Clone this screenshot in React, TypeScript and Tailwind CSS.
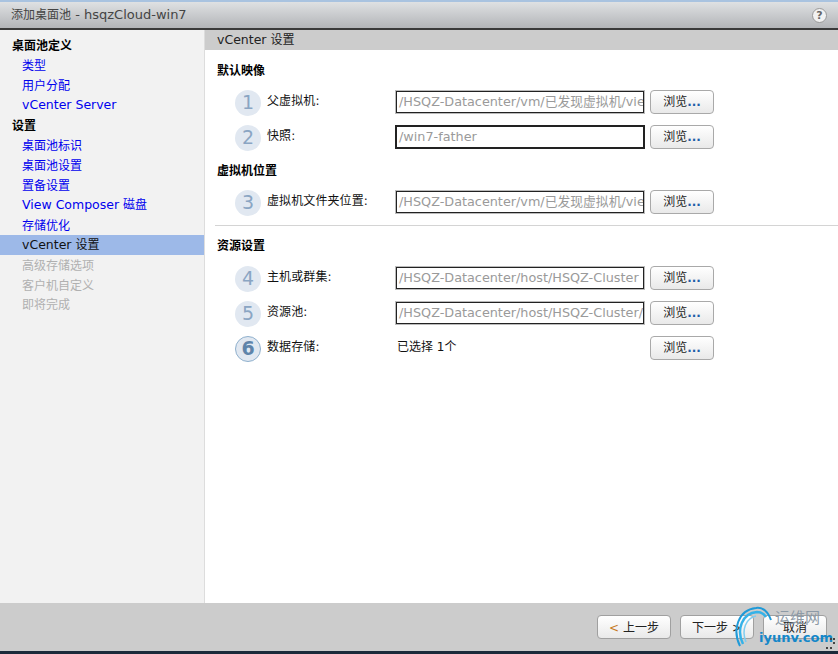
const F = '[font-family:"DejaVu_Sans","Noto_Sans_CJK_SC",sans-serif]';

function L({ children }: { children: string }) {
  return <span className="text-[12.5px]">{children}</span>;
}

function Nav({ children, kind, up }: { children: React.ReactNode; kind: "head" | "link" | "active" | "off"; up?: boolean }) {
  if (kind === "head") return <div className="h-5 pl-3 pt-px font-bold text-[12px] leading-5 text-black">{children}</div>;
  const color = kind === "link" ? "text-[#0000ee]" : kind === "active" ? "text-[#111] bg-[#9db9e8]" : "text-[#b0b0b0]";
  return <div className={`h-5 pl-[22px] text-[12px] leading-5 ${up ? "" : "pt-px"} ${color}`}>{children}</div>;
}

function Browse() {
  return (
    <button className="w-16 h-6 -mt-px shrink-0 rounded-[4px] border border-[#a9a9a9] bg-gradient-to-b from-white to-[#e9e9e9] text-[12px] text-[#222] leading-5">
      浏览<span className="text-[#1f5fa8] font-bold">...</span>
    </button>
  );
}

function Num({ n, active }: { n: number; active?: boolean }) {
  return (
    <div className={`w-[26px] h-[26px] shrink-0 rounded-full flex items-center justify-center text-[19px] leading-none ${active ? "bg-[#e1e8f1] border border-[#8fb0cd] text-[#5e84aa] font-bold" : "bg-[#e1e8f1] text-[#8aa5c3]"}`}>
      {n}
    </div>
  );
}

function Row({ n, label, value, dark, active, plain }: { n: number; label: string; value: string; dark?: boolean; active?: boolean; plain?: boolean }) {
  return (
    <div className="flex items-center h-[35px]">
      <div className="ml-[30px] w-[32px]"><Num n={n} active={active} /></div>
      <div className="w-[128px] text-[12px] text-[#111] -mt-1 tracking-[0.1px]">{label}</div>
      {plain ? (
        <div className="w-[255px] text-[12px] text-[#111] -mt-1 pl-[2px]">{value}</div>
      ) : (
        <div className={`w-[248px] h-[22px] -mt-px ml-px mr-[6px] shrink-0 overflow-hidden whitespace-nowrap bg-white pl-[2px] text-[12.8px] leading-[19px] text-[#9a9a9a] border border-[#222] ${dark ? "shadow-[0_0_0_1px_#222]" : "shadow-[0_0_0_1px_#bbb]"}`}>
          {value}
        </div>
      )}
      <Browse />
    </div>
  );
}

export default function App() {
  return (
    <div className={`relative w-[838px] h-[654px] overflow-hidden bg-white flex flex-col ${F}`}>
      <div className="h-[30px] shrink-0 border-t-2 border-t-[#a9c3e0] border-b-2 border-b-[#3a3a3a] bg-gradient-to-b from-[#dfe1e3] to-[#b3b5b8] flex items-center justify-between pl-[11px] pr-[11px]">
        <span className="text-[12px] text-[#444]">添加桌面池<span className="text-[13px]"> - hsqzCloud-win7</span></span>
        <span className="w-[15px] h-[15px] rounded-full border border-[#999] bg-[#f2f2f2] flex items-center justify-center text-[11px] font-bold text-[#666] leading-none">?</span>
      </div>

      <div className="flex-1 flex min-h-0">
        <div className="w-[205px] shrink-0 bg-[#f2f2f2] border-r border-[#ddd] pt-[5px]">
          <Nav kind="head">桌面池定义</Nav>
          <Nav kind="link">类型</Nav>
          <Nav kind="link">用户分配</Nav>
          <Nav kind="link" up><L>vCenter Server</L></Nav>
          <Nav kind="head">设置</Nav>
          <Nav kind="link">桌面池标识</Nav>
          <Nav kind="link">桌面池设置</Nav>
          <Nav kind="link">置备设置</Nav>
          <Nav kind="link" up><L>View Composer </L>磁盘</Nav>
          <Nav kind="link">存储优化</Nav>
          <Nav kind="active" up><L>vCenter </L>设置</Nav>
          <Nav kind="off">高级存储选项</Nav>
          <Nav kind="off">客户机自定义</Nav>
          <Nav kind="off" up>即将完成</Nav>
        </div>

        <div className="flex-1 min-w-0">
          <div className="h-5 bg-[#cccccc] pl-3 text-[12px] leading-5 text-[#222]"><L>vCenter </L>设置</div>
          <div className="h-[35px] pl-3 pt-[12px] font-bold text-[12px] leading-[18px] text-black">默认映像</div>
          <Row n={1} label="父虚拟机:" value="/HSQZ-Datacenter/vm/已发现虚拟机/view" />
          <Row n={2} label="快照:" dark value="/win7-father" />
          <div className="h-[30px] flex items-center pl-3 pt-0.5 font-bold text-[12px] text-black">虚拟机位置</div>
          <Row n={3} label="虚拟机文件夹位置:" value="/HSQZ-Datacenter/vm/已发现虚拟机/view" />
          <div className="h-px bg-[#d4d4d4] ml-[10px] mt-[5px]" />
          <div className="h-[35px] flex items-center pl-3 pt-1 font-bold text-[12px] text-black">资源设置</div>
          <Row n={4} label="主机或群集:" value="/HSQZ-Datacenter/host/HSQZ-Cluster" />
          <Row n={5} label="资源池:" value="/HSQZ-Datacenter/host/HSQZ-Cluster/" />
          <Row n={6} label="数据存储:" value="已选择 1个" plain active />
        </div>
      </div>

      <div className="h-[51px] shrink-0 border-b-[3px] border-b-[#1c2a3a] bg-[#cccccc] flex items-start justify-end gap-[9px] pt-[12px] pr-[11px]">
        <button className="w-[74px] h-6 pt-px rounded-[4px] border border-[#a0a0a0] bg-gradient-to-b from-white to-[#e9e9e9] text-[12px] text-[#222]"><span className="text-[#c77a1e]">&lt;</span> 上一步</button>
        <button className="w-[74px] h-6 pt-px rounded-[4px] border border-[#a0a0a0] bg-gradient-to-b from-white to-[#e9e9e9] text-[12px] text-[#222]">下一步 &gt;</button>
        <button className="w-[64px] h-6 pt-px rounded-[4px] border border-[#a0a0a0] bg-gradient-to-b from-white to-[#e9e9e9] text-[12px] text-[#222]">取消</button>
      </div>

      <div className="absolute left-[730px] top-[604px] w-[108px] h-[50px] pointer-events-none">
        <svg className="absolute left-0 top-0" width="60" height="46" viewBox="0 0 60 46" fill="none">
          <path d="M10 42 C2 26 8 6 26 4 C33 3 38 8 41 16" stroke="#1f9ad8" strokeWidth="2" />
          <path d="M13 40 C6 26 12 9 27 8 C31 8 34 10 36 13" stroke="#35b2e8" strokeWidth="2.5" />
          <path d="M16 38 C11 26 16 14 26 12" stroke="#7fcdf0" strokeWidth="1.5" />
        </svg>
        <span className="absolute left-[45px] top-[5px] text-[15px] leading-[18px] text-[#8d9aa6]">运维网</span>
        <span className="absolute left-[29px] top-[24px] text-[13px] leading-[20px] font-bold text-[#1487c9]">iyunv.com</span>
      </div>
      <svg className="absolute left-[825px] top-[637px]" width="11" height="13" viewBox="0 0 11 13" fill="#444">
        <rect x="5" y="1" width="2" height="2" /><rect x="8" y="1" width="2" height="2" />
        <rect x="8" y="5" width="2" height="2" />
        <rect x="1" y="10" width="2" height="2" /><rect x="5" y="10" width="2" height="2" />
      </svg>
    </div>
  );
}
